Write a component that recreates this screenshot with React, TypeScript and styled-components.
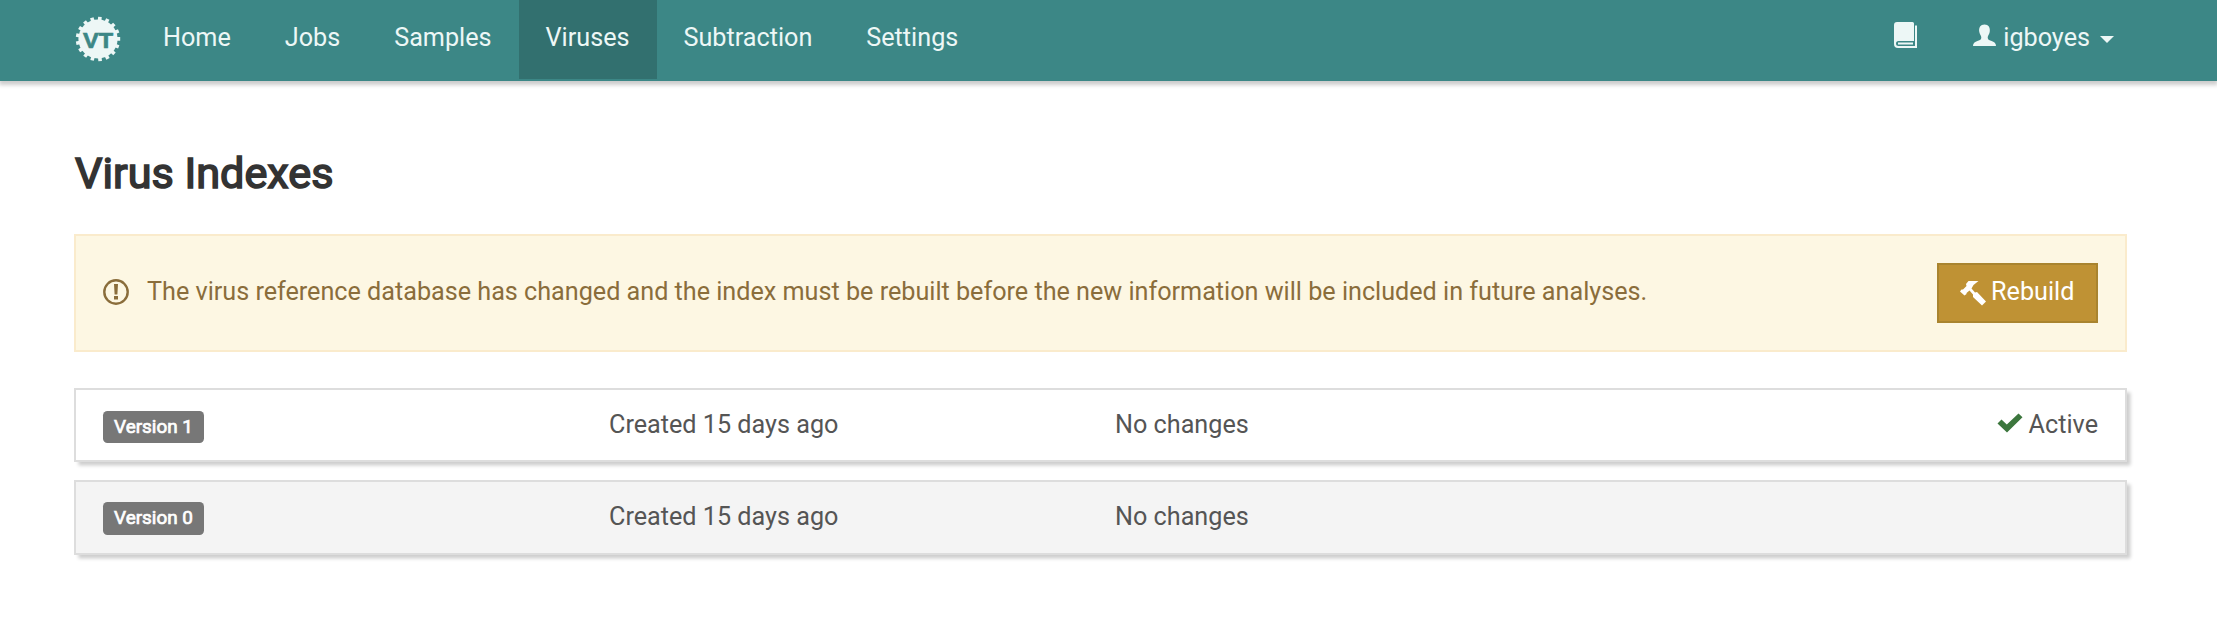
import React from "react";
import styled, { createGlobalStyle } from "styled-components";

const GlobalStyle = createGlobalStyle`
  * { box-sizing: border-box; }
  body {
    margin: 0;
    background: #fff;
    color: #555;
    font-family: Roboto, sans-serif;
    font-size: 25.2px;
    line-height: 36px;
  }
`;

const Navbar = styled.header`
  height: 81px;
  background: #3c8786;
  color: #edf7f6;
  box-shadow: 0 3px 4px 1px rgba(0, 0, 0, 0.2);
`;

const Container = styled.div`
  width: 2053px;
  margin-left: 74px;
`;

const NavInner = styled(Container)`
  display: flex;
  height: 79px;
`;

const Logo = styled.svg`
  width: 46px;
  height: 46px;
  margin: 16px 15px 0 1px;
`;

const NavLink = styled.a<{ $active?: boolean }>`
  display: flex;
  align-items: center;
  height: 79px;
  padding: 0 27px 4px;
  background: ${(p) => (p.$active ? "#32706f" : "transparent")};
`;

const NavRight = styled.div`
  display: flex;
  margin-left: auto;
  margin-right: -14px;
`;

const NavIcon = styled.svg<{ $gap?: number }>`
  width: 24px;
  height: 26px;
  margin-right: ${(p) => p.$gap ?? 0}px;
  margin-top: -5px;
`;

const Caret = styled.span`
  margin: 4px 0 0 10px;
  border: 7.5px solid transparent;
  border-top-color: #edf7f6;
  border-bottom: 0;
`;

const Title = styled.h1`
  margin: 72px 0 40px 1px;
  height: 41px;
  line-height: 41px;
  font-size: 43.2px;
  font-weight: 400;
  color: #333;
  -webkit-text-stroke: 1.6px #333;
`;

const Alert = styled.div`
  display: flex;
  align-items: center;
  height: 118px;
  padding: 0 27px;
  margin-bottom: 36px;
  border: 2px solid #faebcc;
  background: #fdf7e3;
  color: #8a6d3b;
`;

const AlertIcon = styled.svg`
  width: 26px;
  height: 26px;
  margin: -2px 18px 0 0;
`;

const AlertText = styled.span`
  padding-bottom: 2px;
  letter-spacing: -0.012px;
`;

const RebuildButton = styled.button`
  display: flex;
  align-items: center;
  width: 161px;
  height: 60px;
  margin-left: auto;
  padding: 0 0 2px 21px;
  border: 2px solid #a9842f;
  background: #bf9234;
  color: #fff;
  font: inherit;
`;

const HammerIcon = styled.svg`
  width: 26px;
  height: 26px;
  margin: 2px 5px 0 0;
`;

const Row = styled.div<{ $muted?: boolean }>`
  display: grid;
  grid-template-columns: 506px 506px 1fr auto;
  align-items: center;
  height: ${(p) => (p.$muted ? 75 : 74)}px;
  padding: 0 27px ${(p) => (p.$muted ? 2 : 0)}px;
  margin-bottom: 18px;
  border: 2px solid #ddd;
  background: ${(p) => (p.$muted ? "#f4f4f4" : "#fff")};
  box-shadow: 3.6px 3.6px 3.6px rgba(0, 0, 0, 0.2);
`;

const Badge = styled.span<{ $tall?: boolean }>`
  justify-self: start;
  width: 101px;
  height: ${(p) => (p.$tall ? 33 : 32)}px;
  margin-top: ${(p) => (p.$tall ? 4 : 3)}px;
  border-radius: 4.5px;
  background: #777;
  color: #fff;
  text-align: center;
  font-size: 18.9px;
  line-height: 31px;
  -webkit-text-stroke: 0.7px #fff;
`;

const Status = styled.span`
  display: flex;
  align-items: center;
`;

const CheckIcon = styled.svg`
  width: 26px;
  height: 20px;
  margin: -5px 6px 0 0;
`;

const links = ["Home", "Jobs", "Samples", "Viruses", "Subtraction", "Settings"];
const versions = [
  { id: 1, active: true },
  { id: 0, active: false },
];

const teeth = Array.from({ length: 17 }, (_, i) => (i * 360) / 17 + 5);

export default function App() {
  return (
    <>
      <GlobalStyle />
      <Navbar>
        <NavInner>
          <Logo viewBox="-23 -23 46 46">
            <circle r="19.6" fill="#edf7f6" />
            {teeth.map((a) => (
              <rect key={a} x="-1.8" y="-22.2" width="3.6" height="5" fill="#edf7f6" transform={`rotate(${a})`} />
            ))}
            <text
              x="-15"
              y="8.8"
              textLength="30"
              lengthAdjust="spacingAndGlyphs"
              fontFamily="Liberation Sans, sans-serif"
              fontWeight="700"
              fontSize="22"
              fill="#3c8786"
              stroke="#3c8786"
              strokeWidth="0.7"
            >
              VT
            </text>
          </Logo>
          {links.map((label) => (
            <NavLink key={label} $active={label === "Viruses"}>{label}</NavLink>
          ))}
          <NavRight>
            <NavLink>
              <NavIcon $gap={1} viewBox="0 0 24 26" fill="#edf7f6">
                <path d="M3 0h15.500q1.500 0 1.500 1.500V19H4.500Q2 19 2 21.500T4.500 24H21V3.500h2V26H4q-4 0-4-4V3q0-3 3-3z" />
                <path d="M4 20.500h15v2H4z" />
              </NavIcon>
            </NavLink>
            <NavLink>
              <NavIcon $gap={6} viewBox="0 0 24 26" fill="#edf7f6">
                <path d="M11.500 2.500c4 0 6 3 5.200 7.500-.5 2.600-2 3.600-2 5.500 0 2 1.300 2.600 3.300 3.300 3.500 1.200 5 2.500 5 5.200H0c0-2.700 1.500-4 5-5.200 2-.7 3.300-1.300 3.300-3.300 0-1.900-1.500-2.900-2-5.500-.8-4.500 1.200-7.500 5.200-7.500z" />
              </NavIcon>
              igboyes
              <Caret />
            </NavLink>
          </NavRight>
        </NavInner>
      </Navbar>
      <Container as="main">
        <Title>Virus Indexes</Title>
        <Alert>
          <AlertIcon viewBox="0 0 26 26">
            <circle cx="13" cy="13" r="11.700" fill="none" stroke="#8a6d3b" strokeWidth="2.400" />
            <path d="M11 5h4l-.6 10.500h-2.800zM11 17h4v3.500h-4z" fill="#8a6d3b" />
          </AlertIcon>
          <AlertText>
            The virus reference database has changed and the index must be rebuilt before the new information will be included in future analyses.
          </AlertText>
          <RebuildButton>
            <HammerIcon viewBox="0 0 26 26" fill="#fff">
              <path d="M8.500 1H18.500L13.500 5 11.500 8.500 15 12.500 17 12 26 21.500 22 25.500 13 17V14.500L9.500 10.500 6.500 13V14L4.500 15.500 0 11.500 1.500 9.500 3 9.500 6.500 6 6 4z" />
            </HammerIcon>
            Rebuild
          </RebuildButton>
        </Alert>
        {versions.map((v) => (
          <Row key={v.id} $muted={!v.active}>
            <Badge $tall={!v.active}>Version {v.id}</Badge>
            <span>Created 15 days ago</span>
            <span>No changes</span>
            {v.active && (
              <Status>
                <CheckIcon viewBox="0 0 26 20" fill="#3c763d">
                  <path d="M.5 10.500l4-4 5.300 5L21.500.5l4 3.700L10 19.500z" />
                </CheckIcon>
                Active
              </Status>
            )}
          </Row>
        ))}
      </Container>
    </>
  );
}
